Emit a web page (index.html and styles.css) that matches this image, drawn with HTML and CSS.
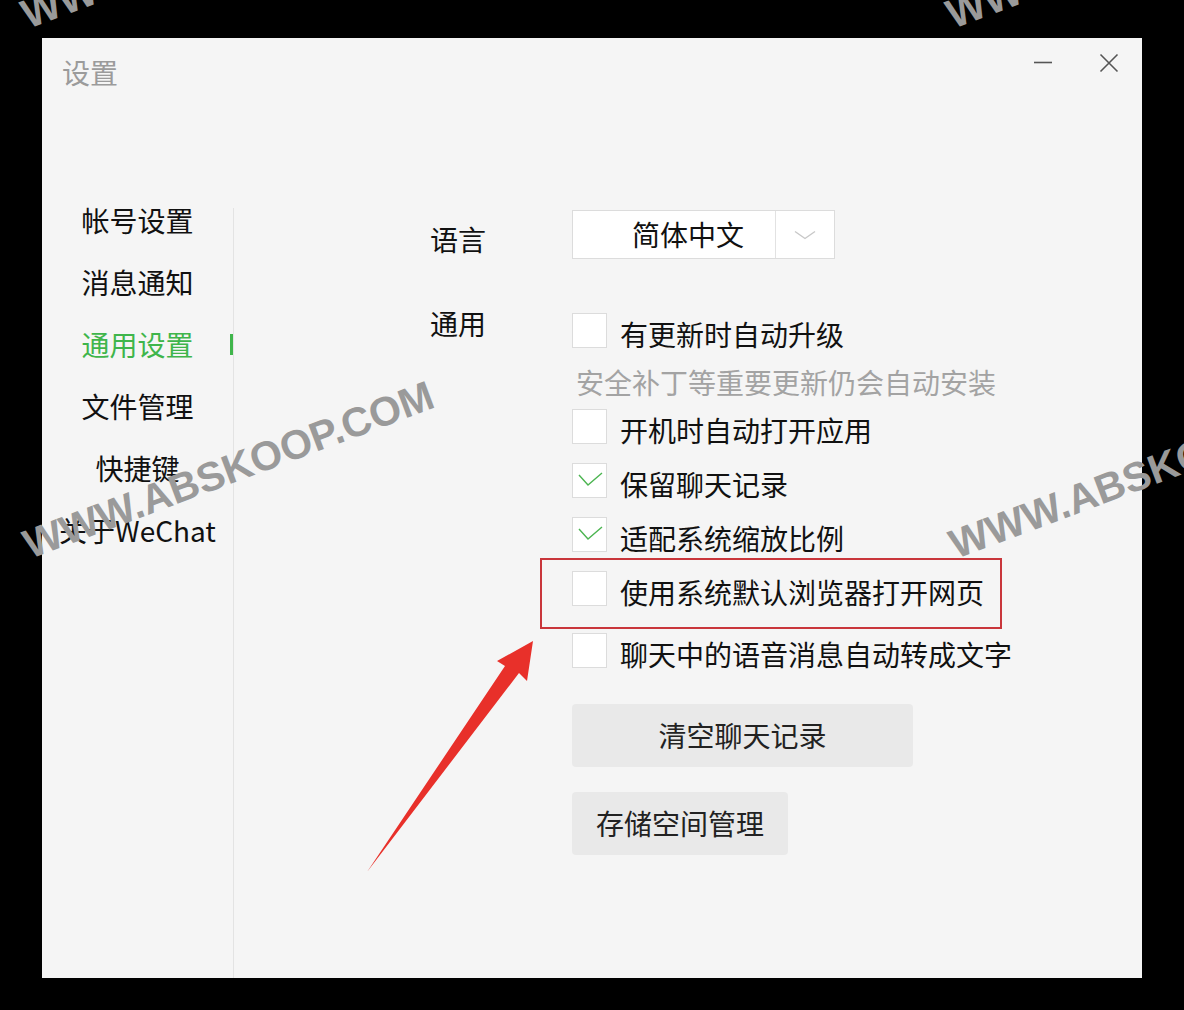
FILE: index.html
```html
<!DOCTYPE html>
<html lang="zh-CN">
<head>
    <meta charset="UTF-8">
    <meta name="viewport" content="width=device-width, initial-scale=1.0">
    <title>设置</title>

    <link rel="stylesheet" href="styles.css">
</head>
<body>
    <div class="window">
        <div class="titlebar">
            <div class="title">设置</div>
            <div class="controls">
                <svg class="ctl" width="20" height="20" viewBox="0 0 20 20">
                    <line x1="1" y1="9.5" x2="19" y2="9.5" stroke="#555" stroke-width="1.6"/>
                </svg>
                <svg class="ctl" width="20" height="20" viewBox="0 0 20 20">
                    <path d="M1.5 1.5 L18.5 18.5 M18.5 1.5 L1.5 18.5" stroke="#555" stroke-width="1.6" fill="none"/>
                </svg>
            </div>
        </div>

        <div class="content">
            <ul class="nav">
                <li>帐号设置</li>
                <li>消息通知</li>
                <li class="active">通用设置</li>
                <li>文件管理</li>
                <li>快捷键</li>
                <li>关于WeChat</li>
            </ul>

            <div class="main">
                <div class="label lang-label">语言</div>
                <div class="select">
                    <div class="select-value">简体中文</div>
                    <div class="select-arrow">
                        <svg width="22" height="10" viewBox="0 0 22 10">
                            <polyline points="1,1.5 11,8.5 21,1.5" fill="none" stroke="#c8c8c8" stroke-width="1.4"/>
                        </svg>
                    </div>
                </div>

                <div class="label gen-label">通用</div>
                <div class="options">
                    <div class="opt">
                        <span class="box"></span>
                        <span class="opt-text">有更新时自动升级</span>
                    </div>
                    <div class="hint">安全补丁等重要更新仍会自动安装</div>
                    <div class="opt">
                        <span class="box"></span>
                        <span class="opt-text">开机时自动打开应用</span>
                    </div>
                    <div class="opt">
                        <span class="box checked">
                            <svg width="33" height="33" viewBox="0 0 33 33"><polyline points="6,11 15,21 29,9" fill="none" stroke="#4cb551" stroke-width="1.4"/></svg>
                        </span>
                        <span class="opt-text">保留聊天记录</span>
                    </div>
                    <div class="opt">
                        <span class="box checked">
                            <svg width="33" height="33" viewBox="0 0 33 33"><polyline points="6,11 15,21 29,9" fill="none" stroke="#4cb551" stroke-width="1.4"/></svg>
                        </span>
                        <span class="opt-text">适配系统缩放比例</span>
                    </div>
                    <div class="opt">
                        <span class="box"></span>
                        <span class="opt-text">使用系统默认浏览器打开网页</span>
                    </div>
                    <div class="opt spaced">
                        <span class="box"></span>
                        <span class="opt-text">聊天中的语音消息自动转成文字</span>
                    </div>

                    <button class="btn btn-wide">清空聊天记录</button>
                    <button class="btn btn-auto">存储空间管理</button>
                </div>
            </div>
        </div>
    </div>

    <div class="marks">
        <span class="wm wm-tl">WWW.ABSKOOP.COM</span>
        <span class="wm wm-tr">WWW.ABSKOOP.COM</span>
        <span class="wm wm-ml">WWW.ABSKOOP.COM</span>
        <span class="wm wm-mr">WWW.ABSKOOP.COM</span>
    </div>

    <svg class="annot" width="1184" height="1010" viewBox="0 0 1184 1010">
        <rect x="541" y="559" width="460" height="69" fill="none" stroke="#c9363b" stroke-width="2"/>
        <polygon points="367,872 505,666 497,661 533,641 527,681 519,673" fill="#e8302a"/>
    </svg>
</body>
</html>
```

FILE: styles.css
```css
* {
    box-sizing: border-box;
}

body {
    margin: 0;
    padding: 38px 0 0 42px;
    width: 1184px;
    height: 1010px;
    background: #000;
    position: relative;
    overflow: hidden;
    font-family: "Noto Sans CJK SC", "Noto Sans", sans-serif;
}

.window {
    width: 1100px;
    height: 940px;
    background: #f5f5f5;
    display: flex;
    flex-direction: column;
}

.titlebar {
    height: 170px;
    display: flex;
    justify-content: space-between;
    align-items: flex-start;
    padding: 15px 23px 0 20px;
}

.title {
    margin-top: 5px;
    font-size: 28px;
    line-height: 28px;
    color: #9b9b9b;
}

.controls {
    display: flex;
    gap: 46px;
}

.ctl {
    display: block;
}

.content {
    flex: 1;
    display: flex;
}

.nav {
    list-style: none;
    margin: 0;
    padding: 0;
    width: 192px;
    border-right: 1px solid #e3e3e3;
    display: flex;
    flex-direction: column;
    gap: 34px;
}

.nav li {
    position: relative;
    font-size: 28px;
    line-height: 28px;
    text-align: center;
    color: #111;
}

.nav li:first-child {
    margin-top: -2px;
}

.nav li.active {
    color: #3fb54b;
}

.nav li.active::after {
    content: "";
    position: absolute;
    right: 0;
    top: 4px;
    width: 3px;
    height: 21px;
    background: #3fb54b;
}

.main {
    padding: 2px 0 0 196px;
    display: grid;
    grid-template-columns: 142px auto;
    align-content: start;
    row-gap: 54px;
}

.label {
    font-size: 28px;
    line-height: 28px;
    color: #111;
}

.lang-label {
    margin-top: 15px;
}

.gen-label {
    margin-top: -4px;
}

.select {
    display: flex;
    width: 263px;
    height: 49px;
    border: 1px solid #dcdcdc;
    background: #fff;
}

.select-value {
    width: 202px;
    padding-left: 59px;
    font-size: 28px;
    line-height: 47px;
    color: #111;
}

.select-arrow {
    flex: 1;
    border-left: 1px solid #e2e2e2;
    display: flex;
    align-items: center;
    justify-content: center;
}

.select-arrow svg {
    display: block;
}

.options {
    display: flex;
    flex-direction: column;
    align-items: flex-start;
}

.opt {
    display: flex;
    align-items: flex-end;
    height: 35px;
    margin-top: 19px;
}

.opt:first-child,
.hint + .opt {
    margin-top: 0;
}

.opt.spaced {
    margin-top: 27px;
}

.box {
    width: 35px;
    height: 35px;
    flex: none;
    border: 1px solid #dcdcdc;
    background: #fff;
}

.box svg {
    display: block;
}

.opt-text {
    margin-left: 13px;
    font-size: 28px;
    line-height: 28px;
    color: #111;
    white-space: nowrap;
}

.hint {
    margin: 20px 0 13px 4px;
    font-size: 28px;
    line-height: 28px;
    color: #a3a3a3;
    white-space: nowrap;
}

.btn {
    margin-top: 36px;
    height: 63px;
    padding: 0;
    border: none;
    border-radius: 4px;
    background: #e9e9e9;
    font-family: inherit;
    font-size: 28px;
    line-height: 63px;
    color: #222;
    text-align: center;
}

.btn-wide {
    width: 341px;
}

.btn-auto {
    margin-top: 25px;
    padding: 0 24px;
}

.marks {
    position: absolute;
    left: 0;
    top: 0;
    width: 1184px;
    height: 1010px;
    pointer-events: none;
}

.wm {
    position: absolute;
    font-family: "Liberation Sans", Arial, sans-serif;
    font-weight: bold;
    font-size: 41px;
    line-height: 40px;
    color: #9a9a9a;
    white-space: nowrap;
    transform-origin: 0 34px;
    transform: rotate(-20.5deg);
}

.wm-tl {
    left: 28px;
    top: -5px;
}

.wm-tr {
    left: 953px;
    top: -5px;
}

.wm-ml {
    left: 30px;
    top: 525px;
}

.wm-mr {
    left: 956px;
    top: 525px;
}

.annot {
    position: absolute;
    left: 0;
    top: 0;
    pointer-events: none;
}
```
